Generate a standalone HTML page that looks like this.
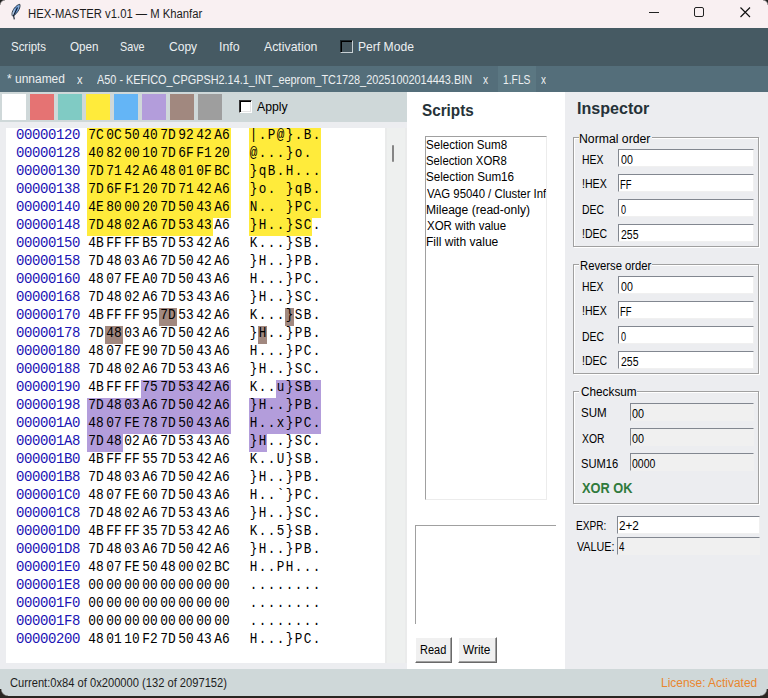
<!DOCTYPE html>
<html><head><meta charset="utf-8"><style>
*{margin:0;padding:0;box-sizing:border-box}
html,body{width:768px;height:698px;overflow:hidden;background:#ecedf0;font-family:"Liberation Sans",sans-serif;font-size:12px;color:#000}
div{position:absolute}
.tx{line-height:20px;white-space:pre;transform-origin:0 0;font-family:"Liberation Sans",sans-serif}
#title{left:0;top:0;width:768px;height:28px;background:#f9f0f2}
#menu{left:0;top:28px;width:768px;height:38px;background:#465a63}
#tabs{left:0;top:66px;width:768px;height:26px;background:#546e7a}
#tool{left:0;top:92px;width:407px;height:30px;background:#cfd8d9}
.sw{top:94px;width:24px;height:26px}
#hexbg{left:6px;top:128px;width:379px;height:535px;background:#ffffff}
.ad,.by,.as{font-family:"Liberation Mono",monospace;font-size:14px;line-height:18px;height:18px;white-space:pre;margin-top:-2px}
.ad{letter-spacing:-0.4px}
.ad{left:16px;color:#1a14b4}
.by{width:18px;text-align:center;color:#000;transform:scaleX(0.92)}
.as{width:9px;text-align:center;color:#000;transform:scaleX(0.9)}
.h{height:18px}
#scr{left:407px;top:92px;width:158px;height:577px;background:#ffffff}
#status{left:0;top:669px;width:768px;height:27px;background:#cfd8d9}
.fr{border:1px solid #a0a0a0;box-shadow:inset 1px 1px 0 #ffffff, 1px 1px 0 #ffffff}
.en{border:1px solid;border-color:#828790 #f0f0f0 #f0f0f0 #828790}
.btn{background:#f0f0f0;border:1px solid;border-color:#ffffff #696969 #696969 #ffffff;box-shadow:inset -1px -1px 0 #a0a0a0}
</style></head><body>
<div id="title"></div>
<svg style="position:absolute;left:0;top:0" width="30" height="24" viewBox="0 0 30 24"><defs><linearGradient id="fg" x1="0" y1="0" x2="1" y2="0"><stop offset="0" stop-color="#dfe9f5"/><stop offset="0.5" stop-color="#5d8fcf"/><stop offset="1" stop-color="#9cc0e6"/></linearGradient></defs><path d="M19.8 4.3 C17 4.8 13.5 8 12.2 12.5 C11.8 14 12 15.5 12.6 16 C14.5 15.8 17.5 12.5 19 9.5 C20 7.5 20.3 5.5 19.8 4.3 Z" fill="url(#fg)" stroke="#1d2a3a" stroke-width="0.9"/><path d="M17.5 7.5 L13.6 15.5 L14.3 19.3" fill="none" stroke="#0f1a2a" stroke-width="1.1"/></svg>
<div class="tx" style="left:28.46px;top:3.50px;font-size:12px;font-weight:normal;color:#1c1c1c;transform:scaleX(0.9400)">HEX-MASTER v1.01 — M Khanfar</div>
<svg style="position:absolute;left:649px;top:7px" width="11" height="11"><path d="M0 5.5 H10" stroke="#222" stroke-width="1"/></svg>
<svg style="position:absolute;left:694px;top:7px" width="11" height="11"><rect x="0.5" y="0.5" width="9" height="9" rx="1.5" fill="none" stroke="#222" stroke-width="1"/></svg>
<svg style="position:absolute;left:740px;top:7px" width="11" height="11"><path d="M0.5 0.5 L10 10 M10 0.5 L0.5 10" stroke="#111" stroke-width="1.15"/></svg>
<div id="menu"></div>
<div class="tx" style="left:10.62px;top:36.80px;font-size:13px;font-weight:normal;color:#eceff1;transform:scaleX(0.8795)">Scripts</div>
<div class="tx" style="left:69.60px;top:36.80px;font-size:13px;font-weight:normal;color:#eceff1;transform:scaleX(0.8968)">Open</div>
<div class="tx" style="left:120.37px;top:36.80px;font-size:13px;font-weight:normal;color:#eceff1;transform:scaleX(0.8310)">Save</div>
<div class="tx" style="left:168.50px;top:36.80px;font-size:13px;font-weight:normal;color:#eceff1;transform:scaleX(0.9267)">Copy</div>
<div class="tx" style="left:218.55px;top:36.80px;font-size:13px;font-weight:normal;color:#eceff1;transform:scaleX(0.9524)">Info</div>
<div class="tx" style="left:263.60px;top:36.80px;font-size:13px;font-weight:normal;color:#eceff1;transform:scaleX(0.9464)">Activation</div>
<div class="tx" style="left:357.57px;top:36.80px;font-size:13px;font-weight:normal;color:#eceff1;transform:scaleX(0.9322)">Perf Mode</div>
<div style="left:340px;top:40px;width:13px;height:13px;border:1px solid;border-color:#1b262b #c9d1d5 #c9d1d5 #1b262b;background:#46575f;box-shadow:inset 1px 1px 0 #000"></div>
<div id="tabs"></div>
<div style="left:498px;top:66px;width:38px;height:26px;background:#5b7782"></div>
<div class="tx" style="left:7.20px;top:69.10px;font-size:12px;font-weight:normal;color:#eceff1;transform:scaleX(0.9983)">* unnamed</div>
<div class="tx" style="left:76.80px;top:70.10px;font-size:12px;font-weight:normal;color:#eceff1;transform:scaleX(0.9167)">x</div>
<div class="tx" style="left:97.20px;top:69.50px;font-size:12px;font-weight:normal;color:#eceff1;transform:scaleX(0.9068)">A50 - KEFICO_CPGPSH2.14.1_INT_eeprom_TC1728_20251002014443.BIN</div>
<div class="tx" style="left:482.90px;top:70.10px;font-size:12px;font-weight:normal;color:#eceff1;transform:scaleX(0.8500)">x</div>
<div class="tx" style="left:502.84px;top:69.50px;font-size:12px;font-weight:normal;color:#eceff1;transform:scaleX(0.8581)">1.FLS</div>
<div class="tx" style="left:541.00px;top:70.10px;font-size:12px;font-weight:normal;color:#eceff1;transform:scaleX(0.8333)">x</div>
<div id="tool"></div>
<div class="sw" style="left:2px;background:#ffffff"></div>
<div class="sw" style="left:30px;background:#e57373"></div>
<div class="sw" style="left:58px;background:#80cbc4"></div>
<div class="sw" style="left:86px;background:#ffeb3b"></div>
<div class="sw" style="left:114px;background:#64b5f6"></div>
<div class="sw" style="left:142px;background:#b39ddb"></div>
<div class="sw" style="left:170px;background:#a1887f"></div>
<div class="sw" style="left:198px;background:#9e9e9e"></div>
<div style="left:239px;top:100px;width:13px;height:13px;border:1px solid;border-color:#333 #fff #fff #333;background:#fff;box-shadow:inset 1px 1px 0 #000, inset -1px -1px 0 #e3e3e3"></div>
<div class="tx" style="left:257.20px;top:96.80px;font-size:12px;font-weight:normal;color:#000;transform:scaleX(1.0233)">Apply</div>
<div id="hexbg"></div>
<div class="ad" style="top:128px">00000120</div>
<div class="h" style="top:128px;left:87px;width:18px;background:#ffeb3b"></div>
<div class="h" style="top:128px;left:249px;width:9px;background:#ffeb3b"></div>
<div class="h" style="top:128px;left:105px;width:18px;background:#ffeb3b"></div>
<div class="h" style="top:128px;left:258px;width:9px;background:#ffeb3b"></div>
<div class="h" style="top:128px;left:123px;width:18px;background:#ffeb3b"></div>
<div class="h" style="top:128px;left:267px;width:9px;background:#ffeb3b"></div>
<div class="h" style="top:128px;left:141px;width:18px;background:#ffeb3b"></div>
<div class="h" style="top:128px;left:276px;width:9px;background:#ffeb3b"></div>
<div class="h" style="top:128px;left:159px;width:18px;background:#ffeb3b"></div>
<div class="h" style="top:128px;left:285px;width:9px;background:#ffeb3b"></div>
<div class="h" style="top:128px;left:177px;width:18px;background:#ffeb3b"></div>
<div class="h" style="top:128px;left:294px;width:9px;background:#ffeb3b"></div>
<div class="h" style="top:128px;left:195px;width:18px;background:#ffeb3b"></div>
<div class="h" style="top:128px;left:303px;width:9px;background:#ffeb3b"></div>
<div class="h" style="top:128px;left:213px;width:18px;background:#ffeb3b"></div>
<div class="h" style="top:128px;left:312px;width:9px;background:#ffeb3b"></div>
<div class="by" style="top:128px;left:87px">7C</div>
<div class="by" style="top:128px;left:105px">0C</div>
<div class="by" style="top:128px;left:123px">50</div>
<div class="by" style="top:128px;left:141px">40</div>
<div class="by" style="top:128px;left:159px">7D</div>
<div class="by" style="top:128px;left:177px">92</div>
<div class="by" style="top:128px;left:195px">42</div>
<div class="by" style="top:128px;left:213px">A6</div>
<div class="as" style="top:128px;left:249px">|</div>
<div class="as" style="top:128px;left:258px">.</div>
<div class="as" style="top:128px;left:267px">P</div>
<div class="as" style="top:128px;left:276px">@</div>
<div class="as" style="top:128px;left:285px">}</div>
<div class="as" style="top:128px;left:294px">.</div>
<div class="as" style="top:128px;left:303px">B</div>
<div class="as" style="top:128px;left:312px">.</div>
<div class="ad" style="top:146px">00000128</div>
<div class="h" style="top:146px;left:87px;width:18px;background:#ffeb3b"></div>
<div class="h" style="top:146px;left:249px;width:9px;background:#ffeb3b"></div>
<div class="h" style="top:146px;left:105px;width:18px;background:#ffeb3b"></div>
<div class="h" style="top:146px;left:258px;width:9px;background:#ffeb3b"></div>
<div class="h" style="top:146px;left:123px;width:18px;background:#ffeb3b"></div>
<div class="h" style="top:146px;left:267px;width:9px;background:#ffeb3b"></div>
<div class="h" style="top:146px;left:141px;width:18px;background:#ffeb3b"></div>
<div class="h" style="top:146px;left:276px;width:9px;background:#ffeb3b"></div>
<div class="h" style="top:146px;left:159px;width:18px;background:#ffeb3b"></div>
<div class="h" style="top:146px;left:285px;width:9px;background:#ffeb3b"></div>
<div class="h" style="top:146px;left:177px;width:18px;background:#ffeb3b"></div>
<div class="h" style="top:146px;left:294px;width:9px;background:#ffeb3b"></div>
<div class="h" style="top:146px;left:195px;width:18px;background:#ffeb3b"></div>
<div class="h" style="top:146px;left:303px;width:9px;background:#ffeb3b"></div>
<div class="h" style="top:146px;left:213px;width:18px;background:#ffeb3b"></div>
<div class="h" style="top:146px;left:312px;width:9px;background:#ffeb3b"></div>
<div class="by" style="top:146px;left:87px">40</div>
<div class="by" style="top:146px;left:105px">82</div>
<div class="by" style="top:146px;left:123px">00</div>
<div class="by" style="top:146px;left:141px">10</div>
<div class="by" style="top:146px;left:159px">7D</div>
<div class="by" style="top:146px;left:177px">6F</div>
<div class="by" style="top:146px;left:195px">F1</div>
<div class="by" style="top:146px;left:213px">20</div>
<div class="as" style="top:146px;left:249px">@</div>
<div class="as" style="top:146px;left:258px">.</div>
<div class="as" style="top:146px;left:267px">.</div>
<div class="as" style="top:146px;left:276px">.</div>
<div class="as" style="top:146px;left:285px">}</div>
<div class="as" style="top:146px;left:294px">o</div>
<div class="as" style="top:146px;left:303px">.</div>
<div class="as" style="top:146px;left:312px">&nbsp;</div>
<div class="ad" style="top:164px">00000130</div>
<div class="h" style="top:164px;left:87px;width:18px;background:#ffeb3b"></div>
<div class="h" style="top:164px;left:249px;width:9px;background:#ffeb3b"></div>
<div class="h" style="top:164px;left:105px;width:18px;background:#ffeb3b"></div>
<div class="h" style="top:164px;left:258px;width:9px;background:#ffeb3b"></div>
<div class="h" style="top:164px;left:123px;width:18px;background:#ffeb3b"></div>
<div class="h" style="top:164px;left:267px;width:9px;background:#ffeb3b"></div>
<div class="h" style="top:164px;left:141px;width:18px;background:#ffeb3b"></div>
<div class="h" style="top:164px;left:276px;width:9px;background:#ffeb3b"></div>
<div class="h" style="top:164px;left:159px;width:18px;background:#ffeb3b"></div>
<div class="h" style="top:164px;left:285px;width:9px;background:#ffeb3b"></div>
<div class="h" style="top:164px;left:177px;width:18px;background:#ffeb3b"></div>
<div class="h" style="top:164px;left:294px;width:9px;background:#ffeb3b"></div>
<div class="h" style="top:164px;left:195px;width:18px;background:#ffeb3b"></div>
<div class="h" style="top:164px;left:303px;width:9px;background:#ffeb3b"></div>
<div class="h" style="top:164px;left:213px;width:18px;background:#ffeb3b"></div>
<div class="h" style="top:164px;left:312px;width:9px;background:#ffeb3b"></div>
<div class="by" style="top:164px;left:87px">7D</div>
<div class="by" style="top:164px;left:105px">71</div>
<div class="by" style="top:164px;left:123px">42</div>
<div class="by" style="top:164px;left:141px">A6</div>
<div class="by" style="top:164px;left:159px">48</div>
<div class="by" style="top:164px;left:177px">01</div>
<div class="by" style="top:164px;left:195px">0F</div>
<div class="by" style="top:164px;left:213px">BC</div>
<div class="as" style="top:164px;left:249px">}</div>
<div class="as" style="top:164px;left:258px">q</div>
<div class="as" style="top:164px;left:267px">B</div>
<div class="as" style="top:164px;left:276px">.</div>
<div class="as" style="top:164px;left:285px">H</div>
<div class="as" style="top:164px;left:294px">.</div>
<div class="as" style="top:164px;left:303px">.</div>
<div class="as" style="top:164px;left:312px">.</div>
<div class="ad" style="top:182px">00000138</div>
<div class="h" style="top:182px;left:87px;width:18px;background:#ffeb3b"></div>
<div class="h" style="top:182px;left:249px;width:9px;background:#ffeb3b"></div>
<div class="h" style="top:182px;left:105px;width:18px;background:#ffeb3b"></div>
<div class="h" style="top:182px;left:258px;width:9px;background:#ffeb3b"></div>
<div class="h" style="top:182px;left:123px;width:18px;background:#ffeb3b"></div>
<div class="h" style="top:182px;left:267px;width:9px;background:#ffeb3b"></div>
<div class="h" style="top:182px;left:141px;width:18px;background:#ffeb3b"></div>
<div class="h" style="top:182px;left:276px;width:9px;background:#ffeb3b"></div>
<div class="h" style="top:182px;left:159px;width:18px;background:#ffeb3b"></div>
<div class="h" style="top:182px;left:285px;width:9px;background:#ffeb3b"></div>
<div class="h" style="top:182px;left:177px;width:18px;background:#ffeb3b"></div>
<div class="h" style="top:182px;left:294px;width:9px;background:#ffeb3b"></div>
<div class="h" style="top:182px;left:195px;width:18px;background:#ffeb3b"></div>
<div class="h" style="top:182px;left:303px;width:9px;background:#ffeb3b"></div>
<div class="h" style="top:182px;left:213px;width:18px;background:#ffeb3b"></div>
<div class="h" style="top:182px;left:312px;width:9px;background:#ffeb3b"></div>
<div class="by" style="top:182px;left:87px">7D</div>
<div class="by" style="top:182px;left:105px">6F</div>
<div class="by" style="top:182px;left:123px">F1</div>
<div class="by" style="top:182px;left:141px">20</div>
<div class="by" style="top:182px;left:159px">7D</div>
<div class="by" style="top:182px;left:177px">71</div>
<div class="by" style="top:182px;left:195px">42</div>
<div class="by" style="top:182px;left:213px">A6</div>
<div class="as" style="top:182px;left:249px">}</div>
<div class="as" style="top:182px;left:258px">o</div>
<div class="as" style="top:182px;left:267px">.</div>
<div class="as" style="top:182px;left:276px">&nbsp;</div>
<div class="as" style="top:182px;left:285px">}</div>
<div class="as" style="top:182px;left:294px">q</div>
<div class="as" style="top:182px;left:303px">B</div>
<div class="as" style="top:182px;left:312px">.</div>
<div class="ad" style="top:200px">00000140</div>
<div class="h" style="top:200px;left:87px;width:18px;background:#ffeb3b"></div>
<div class="h" style="top:200px;left:249px;width:9px;background:#ffeb3b"></div>
<div class="h" style="top:200px;left:105px;width:18px;background:#ffeb3b"></div>
<div class="h" style="top:200px;left:258px;width:9px;background:#ffeb3b"></div>
<div class="h" style="top:200px;left:123px;width:18px;background:#ffeb3b"></div>
<div class="h" style="top:200px;left:267px;width:9px;background:#ffeb3b"></div>
<div class="h" style="top:200px;left:141px;width:18px;background:#ffeb3b"></div>
<div class="h" style="top:200px;left:276px;width:9px;background:#ffeb3b"></div>
<div class="h" style="top:200px;left:159px;width:18px;background:#ffeb3b"></div>
<div class="h" style="top:200px;left:285px;width:9px;background:#ffeb3b"></div>
<div class="h" style="top:200px;left:177px;width:18px;background:#ffeb3b"></div>
<div class="h" style="top:200px;left:294px;width:9px;background:#ffeb3b"></div>
<div class="h" style="top:200px;left:195px;width:18px;background:#ffeb3b"></div>
<div class="h" style="top:200px;left:303px;width:9px;background:#ffeb3b"></div>
<div class="h" style="top:200px;left:213px;width:18px;background:#ffeb3b"></div>
<div class="h" style="top:200px;left:312px;width:9px;background:#ffeb3b"></div>
<div class="by" style="top:200px;left:87px">4E</div>
<div class="by" style="top:200px;left:105px">80</div>
<div class="by" style="top:200px;left:123px">00</div>
<div class="by" style="top:200px;left:141px">20</div>
<div class="by" style="top:200px;left:159px">7D</div>
<div class="by" style="top:200px;left:177px">50</div>
<div class="by" style="top:200px;left:195px">43</div>
<div class="by" style="top:200px;left:213px">A6</div>
<div class="as" style="top:200px;left:249px">N</div>
<div class="as" style="top:200px;left:258px">.</div>
<div class="as" style="top:200px;left:267px">.</div>
<div class="as" style="top:200px;left:276px">&nbsp;</div>
<div class="as" style="top:200px;left:285px">}</div>
<div class="as" style="top:200px;left:294px">P</div>
<div class="as" style="top:200px;left:303px">C</div>
<div class="as" style="top:200px;left:312px">.</div>
<div class="ad" style="top:218px">00000148</div>
<div class="h" style="top:218px;left:87px;width:18px;background:#ffeb3b"></div>
<div class="h" style="top:218px;left:249px;width:9px;background:#ffeb3b"></div>
<div class="h" style="top:218px;left:105px;width:18px;background:#ffeb3b"></div>
<div class="h" style="top:218px;left:258px;width:9px;background:#ffeb3b"></div>
<div class="h" style="top:218px;left:123px;width:18px;background:#ffeb3b"></div>
<div class="h" style="top:218px;left:267px;width:9px;background:#ffeb3b"></div>
<div class="h" style="top:218px;left:141px;width:18px;background:#ffeb3b"></div>
<div class="h" style="top:218px;left:276px;width:9px;background:#ffeb3b"></div>
<div class="h" style="top:218px;left:159px;width:18px;background:#ffeb3b"></div>
<div class="h" style="top:218px;left:285px;width:9px;background:#ffeb3b"></div>
<div class="h" style="top:218px;left:177px;width:18px;background:#ffeb3b"></div>
<div class="h" style="top:218px;left:294px;width:9px;background:#ffeb3b"></div>
<div class="h" style="top:218px;left:195px;width:18px;background:#ffeb3b"></div>
<div class="h" style="top:218px;left:303px;width:9px;background:#ffeb3b"></div>
<div class="by" style="top:218px;left:87px">7D</div>
<div class="by" style="top:218px;left:105px">48</div>
<div class="by" style="top:218px;left:123px">02</div>
<div class="by" style="top:218px;left:141px">A6</div>
<div class="by" style="top:218px;left:159px">7D</div>
<div class="by" style="top:218px;left:177px">53</div>
<div class="by" style="top:218px;left:195px">43</div>
<div class="by" style="top:218px;left:213px">A6</div>
<div class="as" style="top:218px;left:249px">}</div>
<div class="as" style="top:218px;left:258px">H</div>
<div class="as" style="top:218px;left:267px">.</div>
<div class="as" style="top:218px;left:276px">.</div>
<div class="as" style="top:218px;left:285px">}</div>
<div class="as" style="top:218px;left:294px">S</div>
<div class="as" style="top:218px;left:303px">C</div>
<div class="as" style="top:218px;left:312px">.</div>
<div class="ad" style="top:236px">00000150</div>
<div class="by" style="top:236px;left:87px">4B</div>
<div class="by" style="top:236px;left:105px">FF</div>
<div class="by" style="top:236px;left:123px">FF</div>
<div class="by" style="top:236px;left:141px">B5</div>
<div class="by" style="top:236px;left:159px">7D</div>
<div class="by" style="top:236px;left:177px">53</div>
<div class="by" style="top:236px;left:195px">42</div>
<div class="by" style="top:236px;left:213px">A6</div>
<div class="as" style="top:236px;left:249px">K</div>
<div class="as" style="top:236px;left:258px">.</div>
<div class="as" style="top:236px;left:267px">.</div>
<div class="as" style="top:236px;left:276px">.</div>
<div class="as" style="top:236px;left:285px">}</div>
<div class="as" style="top:236px;left:294px">S</div>
<div class="as" style="top:236px;left:303px">B</div>
<div class="as" style="top:236px;left:312px">.</div>
<div class="ad" style="top:254px">00000158</div>
<div class="by" style="top:254px;left:87px">7D</div>
<div class="by" style="top:254px;left:105px">48</div>
<div class="by" style="top:254px;left:123px">03</div>
<div class="by" style="top:254px;left:141px">A6</div>
<div class="by" style="top:254px;left:159px">7D</div>
<div class="by" style="top:254px;left:177px">50</div>
<div class="by" style="top:254px;left:195px">42</div>
<div class="by" style="top:254px;left:213px">A6</div>
<div class="as" style="top:254px;left:249px">}</div>
<div class="as" style="top:254px;left:258px">H</div>
<div class="as" style="top:254px;left:267px">.</div>
<div class="as" style="top:254px;left:276px">.</div>
<div class="as" style="top:254px;left:285px">}</div>
<div class="as" style="top:254px;left:294px">P</div>
<div class="as" style="top:254px;left:303px">B</div>
<div class="as" style="top:254px;left:312px">.</div>
<div class="ad" style="top:272px">00000160</div>
<div class="by" style="top:272px;left:87px">48</div>
<div class="by" style="top:272px;left:105px">07</div>
<div class="by" style="top:272px;left:123px">FE</div>
<div class="by" style="top:272px;left:141px">A0</div>
<div class="by" style="top:272px;left:159px">7D</div>
<div class="by" style="top:272px;left:177px">50</div>
<div class="by" style="top:272px;left:195px">43</div>
<div class="by" style="top:272px;left:213px">A6</div>
<div class="as" style="top:272px;left:249px">H</div>
<div class="as" style="top:272px;left:258px">.</div>
<div class="as" style="top:272px;left:267px">.</div>
<div class="as" style="top:272px;left:276px">.</div>
<div class="as" style="top:272px;left:285px">}</div>
<div class="as" style="top:272px;left:294px">P</div>
<div class="as" style="top:272px;left:303px">C</div>
<div class="as" style="top:272px;left:312px">.</div>
<div class="ad" style="top:290px">00000168</div>
<div class="by" style="top:290px;left:87px">7D</div>
<div class="by" style="top:290px;left:105px">48</div>
<div class="by" style="top:290px;left:123px">02</div>
<div class="by" style="top:290px;left:141px">A6</div>
<div class="by" style="top:290px;left:159px">7D</div>
<div class="by" style="top:290px;left:177px">53</div>
<div class="by" style="top:290px;left:195px">43</div>
<div class="by" style="top:290px;left:213px">A6</div>
<div class="as" style="top:290px;left:249px">}</div>
<div class="as" style="top:290px;left:258px">H</div>
<div class="as" style="top:290px;left:267px">.</div>
<div class="as" style="top:290px;left:276px">.</div>
<div class="as" style="top:290px;left:285px">}</div>
<div class="as" style="top:290px;left:294px">S</div>
<div class="as" style="top:290px;left:303px">C</div>
<div class="as" style="top:290px;left:312px">.</div>
<div class="ad" style="top:308px">00000170</div>
<div class="h" style="top:308px;left:159px;width:18px;background:#a1887f"></div>
<div class="h" style="top:308px;left:285px;width:9px;background:#a1887f"></div>
<div class="by" style="top:308px;left:87px">4B</div>
<div class="by" style="top:308px;left:105px">FF</div>
<div class="by" style="top:308px;left:123px">FF</div>
<div class="by" style="top:308px;left:141px">95</div>
<div class="by" style="top:308px;left:159px">7D</div>
<div class="by" style="top:308px;left:177px">53</div>
<div class="by" style="top:308px;left:195px">42</div>
<div class="by" style="top:308px;left:213px">A6</div>
<div class="as" style="top:308px;left:249px">K</div>
<div class="as" style="top:308px;left:258px">.</div>
<div class="as" style="top:308px;left:267px">.</div>
<div class="as" style="top:308px;left:276px">.</div>
<div class="as" style="top:308px;left:285px">}</div>
<div class="as" style="top:308px;left:294px">S</div>
<div class="as" style="top:308px;left:303px">B</div>
<div class="as" style="top:308px;left:312px">.</div>
<div class="ad" style="top:326px">00000178</div>
<div class="h" style="top:326px;left:105px;width:18px;background:#a1887f"></div>
<div class="h" style="top:326px;left:258px;width:9px;background:#a1887f"></div>
<div class="by" style="top:326px;left:87px">7D</div>
<div class="by" style="top:326px;left:105px">48</div>
<div class="by" style="top:326px;left:123px">03</div>
<div class="by" style="top:326px;left:141px">A6</div>
<div class="by" style="top:326px;left:159px">7D</div>
<div class="by" style="top:326px;left:177px">50</div>
<div class="by" style="top:326px;left:195px">42</div>
<div class="by" style="top:326px;left:213px">A6</div>
<div class="as" style="top:326px;left:249px">}</div>
<div class="as" style="top:326px;left:258px">H</div>
<div class="as" style="top:326px;left:267px">.</div>
<div class="as" style="top:326px;left:276px">.</div>
<div class="as" style="top:326px;left:285px">}</div>
<div class="as" style="top:326px;left:294px">P</div>
<div class="as" style="top:326px;left:303px">B</div>
<div class="as" style="top:326px;left:312px">.</div>
<div class="ad" style="top:344px">00000180</div>
<div class="by" style="top:344px;left:87px">48</div>
<div class="by" style="top:344px;left:105px">07</div>
<div class="by" style="top:344px;left:123px">FE</div>
<div class="by" style="top:344px;left:141px">90</div>
<div class="by" style="top:344px;left:159px">7D</div>
<div class="by" style="top:344px;left:177px">50</div>
<div class="by" style="top:344px;left:195px">43</div>
<div class="by" style="top:344px;left:213px">A6</div>
<div class="as" style="top:344px;left:249px">H</div>
<div class="as" style="top:344px;left:258px">.</div>
<div class="as" style="top:344px;left:267px">.</div>
<div class="as" style="top:344px;left:276px">.</div>
<div class="as" style="top:344px;left:285px">}</div>
<div class="as" style="top:344px;left:294px">P</div>
<div class="as" style="top:344px;left:303px">C</div>
<div class="as" style="top:344px;left:312px">.</div>
<div class="ad" style="top:362px">00000188</div>
<div class="by" style="top:362px;left:87px">7D</div>
<div class="by" style="top:362px;left:105px">48</div>
<div class="by" style="top:362px;left:123px">02</div>
<div class="by" style="top:362px;left:141px">A6</div>
<div class="by" style="top:362px;left:159px">7D</div>
<div class="by" style="top:362px;left:177px">53</div>
<div class="by" style="top:362px;left:195px">43</div>
<div class="by" style="top:362px;left:213px">A6</div>
<div class="as" style="top:362px;left:249px">}</div>
<div class="as" style="top:362px;left:258px">H</div>
<div class="as" style="top:362px;left:267px">.</div>
<div class="as" style="top:362px;left:276px">.</div>
<div class="as" style="top:362px;left:285px">}</div>
<div class="as" style="top:362px;left:294px">S</div>
<div class="as" style="top:362px;left:303px">C</div>
<div class="as" style="top:362px;left:312px">.</div>
<div class="ad" style="top:380px">00000190</div>
<div class="h" style="top:380px;left:141px;width:18px;background:#b39ddb"></div>
<div class="h" style="top:380px;left:276px;width:9px;background:#b39ddb"></div>
<div class="h" style="top:380px;left:159px;width:18px;background:#b39ddb"></div>
<div class="h" style="top:380px;left:285px;width:9px;background:#b39ddb"></div>
<div class="h" style="top:380px;left:177px;width:18px;background:#b39ddb"></div>
<div class="h" style="top:380px;left:294px;width:9px;background:#b39ddb"></div>
<div class="h" style="top:380px;left:195px;width:18px;background:#b39ddb"></div>
<div class="h" style="top:380px;left:303px;width:9px;background:#b39ddb"></div>
<div class="h" style="top:380px;left:213px;width:18px;background:#b39ddb"></div>
<div class="h" style="top:380px;left:312px;width:9px;background:#b39ddb"></div>
<div class="by" style="top:380px;left:87px">4B</div>
<div class="by" style="top:380px;left:105px">FF</div>
<div class="by" style="top:380px;left:123px">FF</div>
<div class="by" style="top:380px;left:141px">75</div>
<div class="by" style="top:380px;left:159px">7D</div>
<div class="by" style="top:380px;left:177px">53</div>
<div class="by" style="top:380px;left:195px">42</div>
<div class="by" style="top:380px;left:213px">A6</div>
<div class="as" style="top:380px;left:249px">K</div>
<div class="as" style="top:380px;left:258px">.</div>
<div class="as" style="top:380px;left:267px">.</div>
<div class="as" style="top:380px;left:276px">u</div>
<div class="as" style="top:380px;left:285px">}</div>
<div class="as" style="top:380px;left:294px">S</div>
<div class="as" style="top:380px;left:303px">B</div>
<div class="as" style="top:380px;left:312px">.</div>
<div class="ad" style="top:398px">00000198</div>
<div class="h" style="top:398px;left:87px;width:18px;background:#b39ddb"></div>
<div class="h" style="top:398px;left:249px;width:9px;background:#b39ddb"></div>
<div class="h" style="top:398px;left:105px;width:18px;background:#b39ddb"></div>
<div class="h" style="top:398px;left:258px;width:9px;background:#b39ddb"></div>
<div class="h" style="top:398px;left:123px;width:18px;background:#b39ddb"></div>
<div class="h" style="top:398px;left:267px;width:9px;background:#b39ddb"></div>
<div class="h" style="top:398px;left:141px;width:18px;background:#b39ddb"></div>
<div class="h" style="top:398px;left:276px;width:9px;background:#b39ddb"></div>
<div class="h" style="top:398px;left:159px;width:18px;background:#b39ddb"></div>
<div class="h" style="top:398px;left:285px;width:9px;background:#b39ddb"></div>
<div class="h" style="top:398px;left:177px;width:18px;background:#b39ddb"></div>
<div class="h" style="top:398px;left:294px;width:9px;background:#b39ddb"></div>
<div class="h" style="top:398px;left:195px;width:18px;background:#b39ddb"></div>
<div class="h" style="top:398px;left:303px;width:9px;background:#b39ddb"></div>
<div class="h" style="top:398px;left:213px;width:18px;background:#b39ddb"></div>
<div class="h" style="top:398px;left:312px;width:9px;background:#b39ddb"></div>
<div class="by" style="top:398px;left:87px">7D</div>
<div class="by" style="top:398px;left:105px">48</div>
<div class="by" style="top:398px;left:123px">03</div>
<div class="by" style="top:398px;left:141px">A6</div>
<div class="by" style="top:398px;left:159px">7D</div>
<div class="by" style="top:398px;left:177px">50</div>
<div class="by" style="top:398px;left:195px">42</div>
<div class="by" style="top:398px;left:213px">A6</div>
<div class="as" style="top:398px;left:249px">}</div>
<div class="as" style="top:398px;left:258px">H</div>
<div class="as" style="top:398px;left:267px">.</div>
<div class="as" style="top:398px;left:276px">.</div>
<div class="as" style="top:398px;left:285px">}</div>
<div class="as" style="top:398px;left:294px">P</div>
<div class="as" style="top:398px;left:303px">B</div>
<div class="as" style="top:398px;left:312px">.</div>
<div class="ad" style="top:416px">000001A0</div>
<div class="h" style="top:416px;left:87px;width:18px;background:#b39ddb"></div>
<div class="h" style="top:416px;left:249px;width:9px;background:#b39ddb"></div>
<div class="h" style="top:416px;left:105px;width:18px;background:#b39ddb"></div>
<div class="h" style="top:416px;left:258px;width:9px;background:#b39ddb"></div>
<div class="h" style="top:416px;left:123px;width:18px;background:#b39ddb"></div>
<div class="h" style="top:416px;left:267px;width:9px;background:#b39ddb"></div>
<div class="h" style="top:416px;left:141px;width:18px;background:#b39ddb"></div>
<div class="h" style="top:416px;left:276px;width:9px;background:#b39ddb"></div>
<div class="h" style="top:416px;left:159px;width:18px;background:#b39ddb"></div>
<div class="h" style="top:416px;left:285px;width:9px;background:#b39ddb"></div>
<div class="h" style="top:416px;left:177px;width:18px;background:#b39ddb"></div>
<div class="h" style="top:416px;left:294px;width:9px;background:#b39ddb"></div>
<div class="h" style="top:416px;left:195px;width:18px;background:#b39ddb"></div>
<div class="h" style="top:416px;left:303px;width:9px;background:#b39ddb"></div>
<div class="h" style="top:416px;left:213px;width:18px;background:#b39ddb"></div>
<div class="h" style="top:416px;left:312px;width:9px;background:#b39ddb"></div>
<div class="by" style="top:416px;left:87px">48</div>
<div class="by" style="top:416px;left:105px">07</div>
<div class="by" style="top:416px;left:123px">FE</div>
<div class="by" style="top:416px;left:141px">78</div>
<div class="by" style="top:416px;left:159px">7D</div>
<div class="by" style="top:416px;left:177px">50</div>
<div class="by" style="top:416px;left:195px">43</div>
<div class="by" style="top:416px;left:213px">A6</div>
<div class="as" style="top:416px;left:249px">H</div>
<div class="as" style="top:416px;left:258px">.</div>
<div class="as" style="top:416px;left:267px">.</div>
<div class="as" style="top:416px;left:276px">x</div>
<div class="as" style="top:416px;left:285px">}</div>
<div class="as" style="top:416px;left:294px">P</div>
<div class="as" style="top:416px;left:303px">C</div>
<div class="as" style="top:416px;left:312px">.</div>
<div class="ad" style="top:434px">000001A8</div>
<div class="h" style="top:434px;left:87px;width:18px;background:#b39ddb"></div>
<div class="h" style="top:434px;left:249px;width:9px;background:#b39ddb"></div>
<div class="h" style="top:434px;left:105px;width:18px;background:#b39ddb"></div>
<div class="h" style="top:434px;left:258px;width:9px;background:#b39ddb"></div>
<div class="by" style="top:434px;left:87px">7D</div>
<div class="by" style="top:434px;left:105px">48</div>
<div class="by" style="top:434px;left:123px">02</div>
<div class="by" style="top:434px;left:141px">A6</div>
<div class="by" style="top:434px;left:159px">7D</div>
<div class="by" style="top:434px;left:177px">53</div>
<div class="by" style="top:434px;left:195px">43</div>
<div class="by" style="top:434px;left:213px">A6</div>
<div class="as" style="top:434px;left:249px">}</div>
<div class="as" style="top:434px;left:258px">H</div>
<div class="as" style="top:434px;left:267px">.</div>
<div class="as" style="top:434px;left:276px">.</div>
<div class="as" style="top:434px;left:285px">}</div>
<div class="as" style="top:434px;left:294px">S</div>
<div class="as" style="top:434px;left:303px">C</div>
<div class="as" style="top:434px;left:312px">.</div>
<div class="ad" style="top:452px">000001B0</div>
<div class="by" style="top:452px;left:87px">4B</div>
<div class="by" style="top:452px;left:105px">FF</div>
<div class="by" style="top:452px;left:123px">FF</div>
<div class="by" style="top:452px;left:141px">55</div>
<div class="by" style="top:452px;left:159px">7D</div>
<div class="by" style="top:452px;left:177px">53</div>
<div class="by" style="top:452px;left:195px">42</div>
<div class="by" style="top:452px;left:213px">A6</div>
<div class="as" style="top:452px;left:249px">K</div>
<div class="as" style="top:452px;left:258px">.</div>
<div class="as" style="top:452px;left:267px">.</div>
<div class="as" style="top:452px;left:276px">U</div>
<div class="as" style="top:452px;left:285px">}</div>
<div class="as" style="top:452px;left:294px">S</div>
<div class="as" style="top:452px;left:303px">B</div>
<div class="as" style="top:452px;left:312px">.</div>
<div class="ad" style="top:470px">000001B8</div>
<div class="by" style="top:470px;left:87px">7D</div>
<div class="by" style="top:470px;left:105px">48</div>
<div class="by" style="top:470px;left:123px">03</div>
<div class="by" style="top:470px;left:141px">A6</div>
<div class="by" style="top:470px;left:159px">7D</div>
<div class="by" style="top:470px;left:177px">50</div>
<div class="by" style="top:470px;left:195px">42</div>
<div class="by" style="top:470px;left:213px">A6</div>
<div class="as" style="top:470px;left:249px">}</div>
<div class="as" style="top:470px;left:258px">H</div>
<div class="as" style="top:470px;left:267px">.</div>
<div class="as" style="top:470px;left:276px">.</div>
<div class="as" style="top:470px;left:285px">}</div>
<div class="as" style="top:470px;left:294px">P</div>
<div class="as" style="top:470px;left:303px">B</div>
<div class="as" style="top:470px;left:312px">.</div>
<div class="ad" style="top:488px">000001C0</div>
<div class="by" style="top:488px;left:87px">48</div>
<div class="by" style="top:488px;left:105px">07</div>
<div class="by" style="top:488px;left:123px">FE</div>
<div class="by" style="top:488px;left:141px">60</div>
<div class="by" style="top:488px;left:159px">7D</div>
<div class="by" style="top:488px;left:177px">50</div>
<div class="by" style="top:488px;left:195px">43</div>
<div class="by" style="top:488px;left:213px">A6</div>
<div class="as" style="top:488px;left:249px">H</div>
<div class="as" style="top:488px;left:258px">.</div>
<div class="as" style="top:488px;left:267px">.</div>
<div class="as" style="top:488px;left:276px">`</div>
<div class="as" style="top:488px;left:285px">}</div>
<div class="as" style="top:488px;left:294px">P</div>
<div class="as" style="top:488px;left:303px">C</div>
<div class="as" style="top:488px;left:312px">.</div>
<div class="ad" style="top:506px">000001C8</div>
<div class="by" style="top:506px;left:87px">7D</div>
<div class="by" style="top:506px;left:105px">48</div>
<div class="by" style="top:506px;left:123px">02</div>
<div class="by" style="top:506px;left:141px">A6</div>
<div class="by" style="top:506px;left:159px">7D</div>
<div class="by" style="top:506px;left:177px">53</div>
<div class="by" style="top:506px;left:195px">43</div>
<div class="by" style="top:506px;left:213px">A6</div>
<div class="as" style="top:506px;left:249px">}</div>
<div class="as" style="top:506px;left:258px">H</div>
<div class="as" style="top:506px;left:267px">.</div>
<div class="as" style="top:506px;left:276px">.</div>
<div class="as" style="top:506px;left:285px">}</div>
<div class="as" style="top:506px;left:294px">S</div>
<div class="as" style="top:506px;left:303px">C</div>
<div class="as" style="top:506px;left:312px">.</div>
<div class="ad" style="top:524px">000001D0</div>
<div class="by" style="top:524px;left:87px">4B</div>
<div class="by" style="top:524px;left:105px">FF</div>
<div class="by" style="top:524px;left:123px">FF</div>
<div class="by" style="top:524px;left:141px">35</div>
<div class="by" style="top:524px;left:159px">7D</div>
<div class="by" style="top:524px;left:177px">53</div>
<div class="by" style="top:524px;left:195px">42</div>
<div class="by" style="top:524px;left:213px">A6</div>
<div class="as" style="top:524px;left:249px">K</div>
<div class="as" style="top:524px;left:258px">.</div>
<div class="as" style="top:524px;left:267px">.</div>
<div class="as" style="top:524px;left:276px">5</div>
<div class="as" style="top:524px;left:285px">}</div>
<div class="as" style="top:524px;left:294px">S</div>
<div class="as" style="top:524px;left:303px">B</div>
<div class="as" style="top:524px;left:312px">.</div>
<div class="ad" style="top:542px">000001D8</div>
<div class="by" style="top:542px;left:87px">7D</div>
<div class="by" style="top:542px;left:105px">48</div>
<div class="by" style="top:542px;left:123px">03</div>
<div class="by" style="top:542px;left:141px">A6</div>
<div class="by" style="top:542px;left:159px">7D</div>
<div class="by" style="top:542px;left:177px">50</div>
<div class="by" style="top:542px;left:195px">42</div>
<div class="by" style="top:542px;left:213px">A6</div>
<div class="as" style="top:542px;left:249px">}</div>
<div class="as" style="top:542px;left:258px">H</div>
<div class="as" style="top:542px;left:267px">.</div>
<div class="as" style="top:542px;left:276px">.</div>
<div class="as" style="top:542px;left:285px">}</div>
<div class="as" style="top:542px;left:294px">P</div>
<div class="as" style="top:542px;left:303px">B</div>
<div class="as" style="top:542px;left:312px">.</div>
<div class="ad" style="top:560px">000001E0</div>
<div class="by" style="top:560px;left:87px">48</div>
<div class="by" style="top:560px;left:105px">07</div>
<div class="by" style="top:560px;left:123px">FE</div>
<div class="by" style="top:560px;left:141px">50</div>
<div class="by" style="top:560px;left:159px">48</div>
<div class="by" style="top:560px;left:177px">00</div>
<div class="by" style="top:560px;left:195px">02</div>
<div class="by" style="top:560px;left:213px">BC</div>
<div class="as" style="top:560px;left:249px">H</div>
<div class="as" style="top:560px;left:258px">.</div>
<div class="as" style="top:560px;left:267px">.</div>
<div class="as" style="top:560px;left:276px">P</div>
<div class="as" style="top:560px;left:285px">H</div>
<div class="as" style="top:560px;left:294px">.</div>
<div class="as" style="top:560px;left:303px">.</div>
<div class="as" style="top:560px;left:312px">.</div>
<div class="ad" style="top:578px">000001E8</div>
<div class="by" style="top:578px;left:87px">00</div>
<div class="by" style="top:578px;left:105px">00</div>
<div class="by" style="top:578px;left:123px">00</div>
<div class="by" style="top:578px;left:141px">00</div>
<div class="by" style="top:578px;left:159px">00</div>
<div class="by" style="top:578px;left:177px">00</div>
<div class="by" style="top:578px;left:195px">00</div>
<div class="by" style="top:578px;left:213px">00</div>
<div class="as" style="top:578px;left:249px">.</div>
<div class="as" style="top:578px;left:258px">.</div>
<div class="as" style="top:578px;left:267px">.</div>
<div class="as" style="top:578px;left:276px">.</div>
<div class="as" style="top:578px;left:285px">.</div>
<div class="as" style="top:578px;left:294px">.</div>
<div class="as" style="top:578px;left:303px">.</div>
<div class="as" style="top:578px;left:312px">.</div>
<div class="ad" style="top:596px">000001F0</div>
<div class="by" style="top:596px;left:87px">00</div>
<div class="by" style="top:596px;left:105px">00</div>
<div class="by" style="top:596px;left:123px">00</div>
<div class="by" style="top:596px;left:141px">00</div>
<div class="by" style="top:596px;left:159px">00</div>
<div class="by" style="top:596px;left:177px">00</div>
<div class="by" style="top:596px;left:195px">00</div>
<div class="by" style="top:596px;left:213px">00</div>
<div class="as" style="top:596px;left:249px">.</div>
<div class="as" style="top:596px;left:258px">.</div>
<div class="as" style="top:596px;left:267px">.</div>
<div class="as" style="top:596px;left:276px">.</div>
<div class="as" style="top:596px;left:285px">.</div>
<div class="as" style="top:596px;left:294px">.</div>
<div class="as" style="top:596px;left:303px">.</div>
<div class="as" style="top:596px;left:312px">.</div>
<div class="ad" style="top:614px">000001F8</div>
<div class="by" style="top:614px;left:87px">00</div>
<div class="by" style="top:614px;left:105px">00</div>
<div class="by" style="top:614px;left:123px">00</div>
<div class="by" style="top:614px;left:141px">00</div>
<div class="by" style="top:614px;left:159px">00</div>
<div class="by" style="top:614px;left:177px">00</div>
<div class="by" style="top:614px;left:195px">00</div>
<div class="by" style="top:614px;left:213px">00</div>
<div class="as" style="top:614px;left:249px">.</div>
<div class="as" style="top:614px;left:258px">.</div>
<div class="as" style="top:614px;left:267px">.</div>
<div class="as" style="top:614px;left:276px">.</div>
<div class="as" style="top:614px;left:285px">.</div>
<div class="as" style="top:614px;left:294px">.</div>
<div class="as" style="top:614px;left:303px">.</div>
<div class="as" style="top:614px;left:312px">.</div>
<div class="ad" style="top:632px">00000200</div>
<div class="by" style="top:632px;left:87px">48</div>
<div class="by" style="top:632px;left:105px">01</div>
<div class="by" style="top:632px;left:123px">10</div>
<div class="by" style="top:632px;left:141px">F2</div>
<div class="by" style="top:632px;left:159px">7D</div>
<div class="by" style="top:632px;left:177px">50</div>
<div class="by" style="top:632px;left:195px">43</div>
<div class="by" style="top:632px;left:213px">A6</div>
<div class="as" style="top:632px;left:249px">H</div>
<div class="as" style="top:632px;left:258px">.</div>
<div class="as" style="top:632px;left:267px">.</div>
<div class="as" style="top:632px;left:276px">.</div>
<div class="as" style="top:632px;left:285px">}</div>
<div class="as" style="top:632px;left:294px">P</div>
<div class="as" style="top:632px;left:303px">C</div>
<div class="as" style="top:632px;left:312px">.</div>
<div style="left:385px;top:128px;width:22px;height:535px;background:#eef0ef;border-left:2px solid #eaebeb;border-right:2px solid #eaebeb"></div>
<div style="left:392px;top:145px;width:2px;height:17px;background:#858585;border-radius:1px"></div>
<div id="scr"></div>
<div class="tx" style="left:421.80px;top:101.10px;font-size:16px;font-weight:bold;color:#263238;transform:scaleX(0.9537)">Scripts</div>
<div style="left:425px;top:136px;width:122px;height:364px;border:1px solid;border-color:#a0a0a0 #ececec #ececec #a0a0a0"></div>
<div style="left:0;top:0;width:546px;height:499px;overflow:hidden">
<div class="tx" style="left:426.23px;top:135.20px;font-size:12px;font-weight:normal;color:#000;transform:scaleX(0.9651)">Selection Sum8</div>
<div class="tx" style="left:426.25px;top:151.30px;font-size:12px;font-weight:normal;color:#000;transform:scaleX(0.9452)">Selection XOR8</div>
<div class="tx" style="left:426.23px;top:167.40px;font-size:12px;font-weight:normal;color:#000;transform:scaleX(0.9708)">Selection Sum16</div>
<div class="tx" style="left:427.20px;top:184.00px;font-size:12px;font-weight:normal;color:#000;transform:scaleX(0.9476)">VAG 95040 / Cluster Info</div>
<div class="tx" style="left:426.19px;top:199.60px;font-size:12px;font-weight:normal;color:#000;transform:scaleX(1.0059)">Mileage (read-only)</div>
<div class="tx" style="left:427.20px;top:215.70px;font-size:12px;font-weight:normal;color:#000;transform:scaleX(0.9566)">XOR with value</div>
<div class="tx" style="left:426.20px;top:231.80px;font-size:12px;font-weight:normal;color:#000;transform:scaleX(1.0042)">Fill with value</div>
</div>
<div style="left:415px;top:525px;width:141px;height:99px;border-left:1px solid #a0a0a0;border-top:1px solid #a0a0a0"></div>
<div class="btn" style="left:415px;top:637px;width:37px;height:26px"></div>
<div class="btn" style="left:458px;top:637px;width:39px;height:26px"></div>
<div class="tx" style="left:419.89px;top:640.20px;font-size:12px;font-weight:normal;color:#000;transform:scaleX(0.9148)">Read</div>
<div class="tx" style="left:463.30px;top:640.20px;font-size:12px;font-weight:normal;color:#000;transform:scaleX(0.9857)">Write</div>
<div class="tx" style="left:577.40px;top:99.30px;font-size:16px;font-weight:bold;color:#263238;transform:scaleX(1.0042)">Inspector</div>
<div class="fr" style="left:573px;top:137px;width:186px;height:110px"></div><div style="left:579px;top:135px;width:73px;height:5px;background:#ecedf0"></div>
<div class="en" style="left:618px;top:149px;width:136px;height:18px;background:#ffffff"></div>
<div class="en" style="left:618px;top:174px;width:136px;height:18px;background:#ffffff"></div>
<div class="en" style="left:618px;top:199px;width:136px;height:18px;background:#ffffff"></div>
<div class="en" style="left:618px;top:224px;width:136px;height:18px;background:#ffffff"></div>
<div class="fr" style="left:573px;top:264px;width:186px;height:110px"></div><div style="left:579px;top:262px;width:73px;height:5px;background:#ecedf0"></div>
<div class="en" style="left:618px;top:276px;width:136px;height:18px;background:#ffffff"></div>
<div class="en" style="left:618px;top:301px;width:136px;height:18px;background:#ffffff"></div>
<div class="en" style="left:618px;top:326px;width:136px;height:18px;background:#ffffff"></div>
<div class="en" style="left:618px;top:351px;width:136px;height:18px;background:#ffffff"></div>
<div class="fr" style="left:573px;top:391px;width:186px;height:113px"></div><div style="left:579px;top:389px;width:58px;height:5px;background:#ecedf0"></div>
<div class="en" style="left:630px;top:403px;width:124px;height:18px;background:#f0f0f0"></div>
<div class="en" style="left:630px;top:428px;width:124px;height:18px;background:#f0f0f0"></div>
<div class="en" style="left:630px;top:453px;width:124px;height:18px;background:#f0f0f0"></div>
<div class="en" style="left:617px;top:516px;width:143px;height:18px;background:#ffffff"></div>
<div class="en" style="left:617px;top:537px;width:143px;height:18px;background:#f0f0f0"></div>
<div class="tx" style="left:579.48px;top:128.50px;font-size:12px;font-weight:normal;color:#000;transform:scaleX(1.0203)">Normal order</div>
<div class="tx" style="left:579.56px;top:255.50px;font-size:12px;font-weight:normal;color:#000;transform:scaleX(0.9387)">Reverse order</div>
<div class="tx" style="left:580.50px;top:382.20px;font-size:12px;font-weight:normal;color:#000;transform:scaleX(0.9821)">Checksum</div>
<div class="tx" style="left:582.03px;top:149.70px;font-size:12px;font-weight:normal;color:#000;transform:scaleX(0.8667)">HEX</div>
<div class="tx" style="left:582.01px;top:174.40px;font-size:12px;font-weight:normal;color:#000;transform:scaleX(0.8852)">!HEX</div>
<div class="tx" style="left:582.03px;top:199.50px;font-size:12px;font-weight:normal;color:#000;transform:scaleX(0.8667)">DEC</div>
<div class="tx" style="left:582.03px;top:223.90px;font-size:12px;font-weight:normal;color:#000;transform:scaleX(0.8741)">!DEC</div>
<div class="tx" style="left:620.60px;top:150.00px;font-size:12px;font-weight:normal;color:#000;transform:scaleX(0.8846)">00</div>
<div class="tx" style="left:619.81px;top:175.00px;font-size:12px;font-weight:normal;color:#000;transform:scaleX(0.7857)">FF</div>
<div class="tx" style="left:620.60px;top:200.00px;font-size:12px;font-weight:normal;color:#000;transform:scaleX(0.7571)">0</div>
<div class="tx" style="left:620.60px;top:225.00px;font-size:12px;font-weight:normal;color:#000;transform:scaleX(0.8750)">255</div>
<div class="tx" style="left:582.03px;top:276.70px;font-size:12px;font-weight:normal;color:#000;transform:scaleX(0.8667)">HEX</div>
<div class="tx" style="left:582.01px;top:301.40px;font-size:12px;font-weight:normal;color:#000;transform:scaleX(0.8852)">!HEX</div>
<div class="tx" style="left:582.03px;top:326.50px;font-size:12px;font-weight:normal;color:#000;transform:scaleX(0.8667)">DEC</div>
<div class="tx" style="left:582.03px;top:350.90px;font-size:12px;font-weight:normal;color:#000;transform:scaleX(0.8741)">!DEC</div>
<div class="tx" style="left:620.60px;top:277.00px;font-size:12px;font-weight:normal;color:#000;transform:scaleX(0.8846)">00</div>
<div class="tx" style="left:619.81px;top:302.00px;font-size:12px;font-weight:normal;color:#000;transform:scaleX(0.7857)">FF</div>
<div class="tx" style="left:620.60px;top:327.00px;font-size:12px;font-weight:normal;color:#000;transform:scaleX(0.7571)">0</div>
<div class="tx" style="left:620.60px;top:352.00px;font-size:12px;font-weight:normal;color:#000;transform:scaleX(0.8750)">255</div>
<div class="tx" style="left:581.44px;top:403.30px;font-size:12px;font-weight:normal;color:#000;transform:scaleX(0.9640)">SUM</div>
<div class="tx" style="left:582.40px;top:428.70px;font-size:12px;font-weight:normal;color:#000;transform:scaleX(0.8615)">XOR</div>
<div class="tx" style="left:581.47px;top:453.50px;font-size:12px;font-weight:normal;color:#000;transform:scaleX(0.9308)">SUM16</div>
<div class="tx" style="left:632.30px;top:404.30px;font-size:12px;font-weight:normal;color:#000;transform:scaleX(0.9000)">00</div>
<div class="tx" style="left:632.30px;top:429.30px;font-size:12px;font-weight:normal;color:#000;transform:scaleX(0.9000)">00</div>
<div class="tx" style="left:632.30px;top:454.30px;font-size:12px;font-weight:normal;color:#000;transform:scaleX(0.8741)">0000</div>
<div class="tx" style="left:582.40px;top:478.00px;font-size:14px;font-weight:bold;color:#2f7a3c;transform:scaleX(0.9127)">XOR OK</div>
<div class="tx" style="left:575.96px;top:516.25px;font-size:12px;font-weight:normal;color:#000;transform:scaleX(0.8412)">EXPR:</div>
<div class="tx" style="left:576.50px;top:536.80px;font-size:12px;font-weight:normal;color:#000;transform:scaleX(0.8951)">VALUE:</div>
<div class="tx" style="left:619.20px;top:516.25px;font-size:12px;font-weight:normal;color:#000;transform:scaleX(0.9775)">2+2</div>
<div class="tx" style="left:619.00px;top:536.80px;font-size:12px;font-weight:normal;color:#000;transform:scaleX(0.8143)">4</div>
<div id="status"></div>
<div class="tx" style="left:9.70px;top:672.80px;font-size:12px;font-weight:normal;color:#1e1e1e;transform:scaleX(0.9292)">Current:0x84 of 0x200000 (132 of 2097152)</div>
<div class="tx" style="left:660.91px;top:672.90px;font-size:12px;font-weight:normal;color:#e9862e;transform:scaleX(0.9947)">License: Activated</div>
<div style="left:0;top:696px;width:768px;height:2px;background:#2a2622"></div>
<div style="left:0;top:689px;width:8px;height:8px;background:radial-gradient(circle at 8px 0px, transparent 6px, #2a2622 7.5px)"></div>
<div style="left:760px;top:689px;width:8px;height:8px;background:radial-gradient(circle at 0px 0px, transparent 6px, #2a2622 7.5px)"></div>
<div style="left:0;top:0;width:5px;height:5px;background:radial-gradient(circle at 5px 5px, transparent 4px, #222 5.5px)"></div>
<div style="left:763px;top:0;width:5px;height:5px;background:radial-gradient(circle at 0px 5px, transparent 4px, #222 5.5px)"></div>
</body></html>
